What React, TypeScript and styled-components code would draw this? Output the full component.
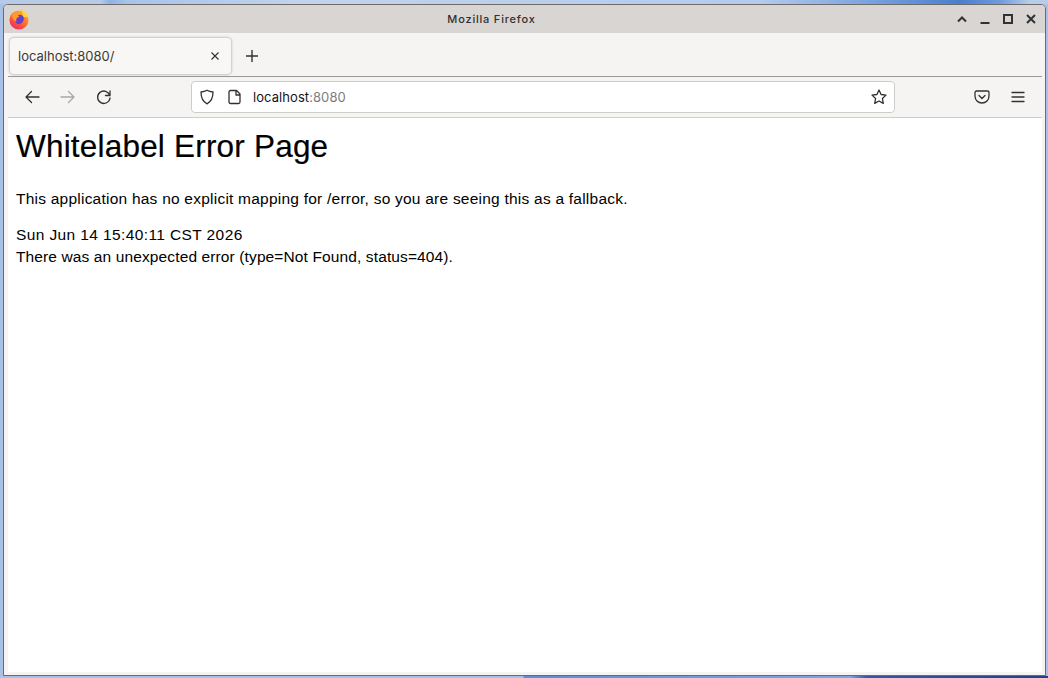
import React from 'react';
import styled, { createGlobalStyle } from 'styled-components';

const GlobalStyle = createGlobalStyle`
  html, body {
    margin: 0;
    padding: 0;
    height: 100%;
    overflow: hidden;
  }
  #root {
    height: 100%;
  }
`;

const Desktop = styled.div`
  box-sizing: border-box;
  width: 1048px;
  height: 678px;
  padding: 4px 2px 2px 3px;
  background:
    linear-gradient(90deg, #b7cbe9 0, #b7cbe9 100px, #8fb2e6 110px, #a8c3ea 127px, #c2d3ec 300px, #b4cbec 760px, #7fa6e0 860px, #4a7fd0 960px, #6f9ade 1000px, #b9cde9 1030px) top / 100% 4px no-repeat,
    linear-gradient(90deg, #a9c1e6 0, #a9c1e6 523px, #5b8ddb 524px, #7ba8e2 850px, #3158ac 866px, #233f8c 1048px) bottom / 100% 2px no-repeat,
    #a9c1e6;
`;

const Window = styled.div`
  box-sizing: border-box;
  height: 100%;
  display: flex;
  flex-direction: column;
  background: #f5f4f2;
  border: 1px solid #6d6a67;
  border-radius: 5px 5px 0 0;
  overflow: hidden;
  font-family: Inter, "Liberation Sans", sans-serif;
`;

const TitleBar = styled.div`
  flex: 0 0 28px;
  position: relative;
  display: flex;
  align-items: center;
  justify-content: center;
  padding-right: 66px;
  background: #d9d5d2;
  font-size: 11px;
  font-weight: 500;
  letter-spacing: 0.8px;
  color: #33302e;
`;

const AppLogo = styled.svg`
  position: absolute;
  left: 4px;
  top: 3px;
`;

const WindowControls = styled.div`
  position: absolute;
  right: 8px;
  top: 8px;
  display: flex;
  gap: 11px;
  color: #2e3436;
`;

const Shell = styled.div`
  flex: 1;
  min-height: 0;
  display: flex;
  flex-direction: column;
  padding: 0 3px 3px 4px;
`;

const TabStrip = styled.div`
  flex: 0 0 44px;
  box-sizing: border-box;
  display: flex;
  align-items: center;
  gap: 14px;
  padding: 2px 0 0 2px;
  border-bottom: 1px solid #9b9997;
`;

const Tab = styled.div`
  box-sizing: border-box;
  width: 221px;
  height: 36px;
  display: flex;
  align-items: center;
  justify-content: space-between;
  padding: 0 11px 0 8px;
  background: #f8f7f5;
  border-radius: 4px;
  box-shadow: 0 0 3px rgba(0, 0, 0, 0.4);
  font-size: 13px;
  color: #3b3a38;
`;

const NavBar = styled.div`
  flex: 0 0 41px;
  box-sizing: border-box;
  display: flex;
  align-items: center;
  padding: 0 15px;
  border-bottom: 1px solid #cfcdca;
`;

const NavButtons = styled.div`
  display: flex;
  gap: 18px;
  margin-right: 78px;
`;

const UrlBox = styled.div`
  box-sizing: border-box;
  width: 705px;
  height: 32px;
  display: flex;
  align-items: center;
  gap: 10px;
  padding: 0 6px;
  background: #fff;
  border: 1px solid #cfcdca;
  border-radius: 4px;
  font-size: 13px;
  color: #15141a;
`;

const UrlText = styled.span`
  flex: 1;
  margin-left: -1px;
  letter-spacing: 0.07px;
`;

const UrlPort = styled.span`
  color: #7d7c80;
`;

const ToolButtons = styled.div`
  display: flex;
  gap: 18px;
  margin-left: 78px;
`;

const Content = styled.main`
  flex: 1;
  min-height: 0;
  padding: 8px;
  background: #fff;
  color: #000;
  font-family: "Liberation Sans", Arial, sans-serif;
  font-size: 15.5px;
`;

const Heading = styled.h1`
  margin: 0;
  padding-top: 2px;
  font-size: 31.5px;
  font-weight: 400;
  line-height: 37px;
  letter-spacing: 0.2px;
  -webkit-text-stroke: 0.2px #000;
`;

const Paragraph = styled.p`
  margin: 25px 0 16px;
  line-height: 18px;
  letter-spacing: 0.23px;
`;

const Detail = styled.div<{ $tracking: number }>`
  line-height: 22px;
  letter-spacing: ${(p) => p.$tracking}px;
`;

type IconProps = { color?: string; children: React.ReactNode };

const Icon = ({ color = '#33302e', children }: IconProps) => (
  <svg width="18" height="18" viewBox="0 0 18 18" fill="none" stroke={color} strokeWidth="1.3" strokeLinecap="round" strokeLinejoin="round">
    {children}
  </svg>
);

const FirefoxLogo = () => (
  <AppLogo width="22" height="22" viewBox="0 0 22 22">
    <defs>
      <linearGradient id="ffOuter" x1="0.85" y1="0.05" x2="0.2" y2="1">
        <stop offset="0" stopColor="#ffc02e" />
        <stop offset="0.5" stopColor="#ff6a2b" />
        <stop offset="1" stopColor="#f0246a" />
      </linearGradient>
    </defs>
    <circle cx="11" cy="12" r="9.6" fill="url(#ffOuter)" />
    <path d="M13 1c3 2 6 4 7 8l-5 0c0-3-1-5-2-8z" fill="#ffd23f" />
    <circle cx="11.500" cy="11.500" r="4.800" fill="#6a3fc8" />
    <path d="M4 6c2-2 6-2.500 9-1l-3 2.500 1.500 1.500C9 9 7.500 11 8.500 14 5.500 12.500 3.500 9 4 6z" fill="#ff9a2b" />
    <path d="M15.500 9c1 3-.5 6-3.500 7 2 .2 5-1 5.500-4 .2-1-.5-2.500-2-3z" fill="#ff7a2b" />
  </AppLogo>
);

export default function App() {
  return (
    <Desktop>
      <GlobalStyle />
      <Window>
        <TitleBar>
          <FirefoxLogo />
          Mozilla Firefox
          <WindowControls>
            <svg width="12" height="12" viewBox="0 0 12 12" fill="none" stroke="currentColor" strokeWidth="2"><path d="M2 8.500l4-4 4 4" /></svg>
            <svg width="12" height="12" viewBox="0 0 12 12" fill="none" stroke="currentColor" strokeWidth="2"><path d="M1.500 10h9" /></svg>
            <svg width="12" height="12" viewBox="0 0 12 12" fill="none" stroke="currentColor" strokeWidth="2"><rect x="2" y="2" width="8" height="8" /></svg>
            <svg width="12" height="12" viewBox="0 0 12 12" fill="none" stroke="currentColor" strokeWidth="2"><path d="M2 2l8 8M10 2l-8 8" /></svg>
          </WindowControls>
        </TitleBar>
        <Shell>
          <TabStrip>
            <Tab>
              localhost:8080/
              <svg width="10" height="10" viewBox="0 0 10 10" fill="none" stroke="#33302e" strokeWidth="1.1"><path d="M1.500 1.500l7 7M8.500 1.500l-7 7" /></svg>
            </Tab>
            <svg width="14" height="14" viewBox="0 0 14 14" fill="none" stroke="#33302e" strokeWidth="1.4"><path d="M7 1v12M1 7h12" /></svg>
          </TabStrip>
          <NavBar>
            <NavButtons>
              <Icon><path d="M16 9H3M8.500 3.500L3 9l5.500 5.500" /></Icon>
              <Icon color="#a9a8a6"><path d="M2 9h13M9.500 3.500L15 9l-5.500 5.500" /></Icon>
              <Icon><path d="M14.800 7.500A6.200 6.200 0 1 0 15 10M15 3v4.500h-4.500" /></Icon>
            </NavButtons>
            <UrlBox>
              <Icon><path d="M9 2.200c2 1.200 4 1.600 6 1.800 0 5.500-1.500 9.500-6 11.800C4.500 13.500 3 9.500 3 4c2-.2 4-.6 6-1.800z" /></Icon>
              <Icon><path d="M4.500 2.500h6l3.500 3.500v8c0 .8-.6 1.500-1.500 1.500h-8c-.8 0-1.500-.7-1.500-1.500v-10c0-.8.700-1.500 1.500-1.500zM10 2.500V7h4" /></Icon>
              <UrlText>localhost<UrlPort>:8080</UrlPort></UrlText>
              <Icon><path d="M9 2l2.100 4.500 4.900.6-3.600 3.400.9 4.900L9 13l-4.300 2.400.9-4.900L2 7.100l4.900-.6z" /></Icon>
            </UrlBox>
            <ToolButtons>
              <Icon><path d="M3.500 3h11c.8 0 1.500.7 1.500 1.500V8c0 4-3 7-7 7s-7-3-7-7V4.500C2 3.700 2.700 3 3.500 3zM6 7.500L9 10.500l3-3" /></Icon>
              <Icon><path d="M3 4.500h12M3 9h12M3 13.500h12" /></Icon>
            </ToolButtons>
          </NavBar>
          <Content>
            <Heading>Whitelabel Error Page</Heading>
            <Paragraph>This application has no explicit mapping for /error, so you are seeing this as a fallback.</Paragraph>
            <Detail $tracking={0.39}>Sun Jun 14 15:40:11 CST 2026</Detail>
            <Detail $tracking={0.12}>There was an unexpected error (type=Not Found, status=404).</Detail>
          </Content>
        </Shell>
      </Window>
    </Desktop>
  );
}
